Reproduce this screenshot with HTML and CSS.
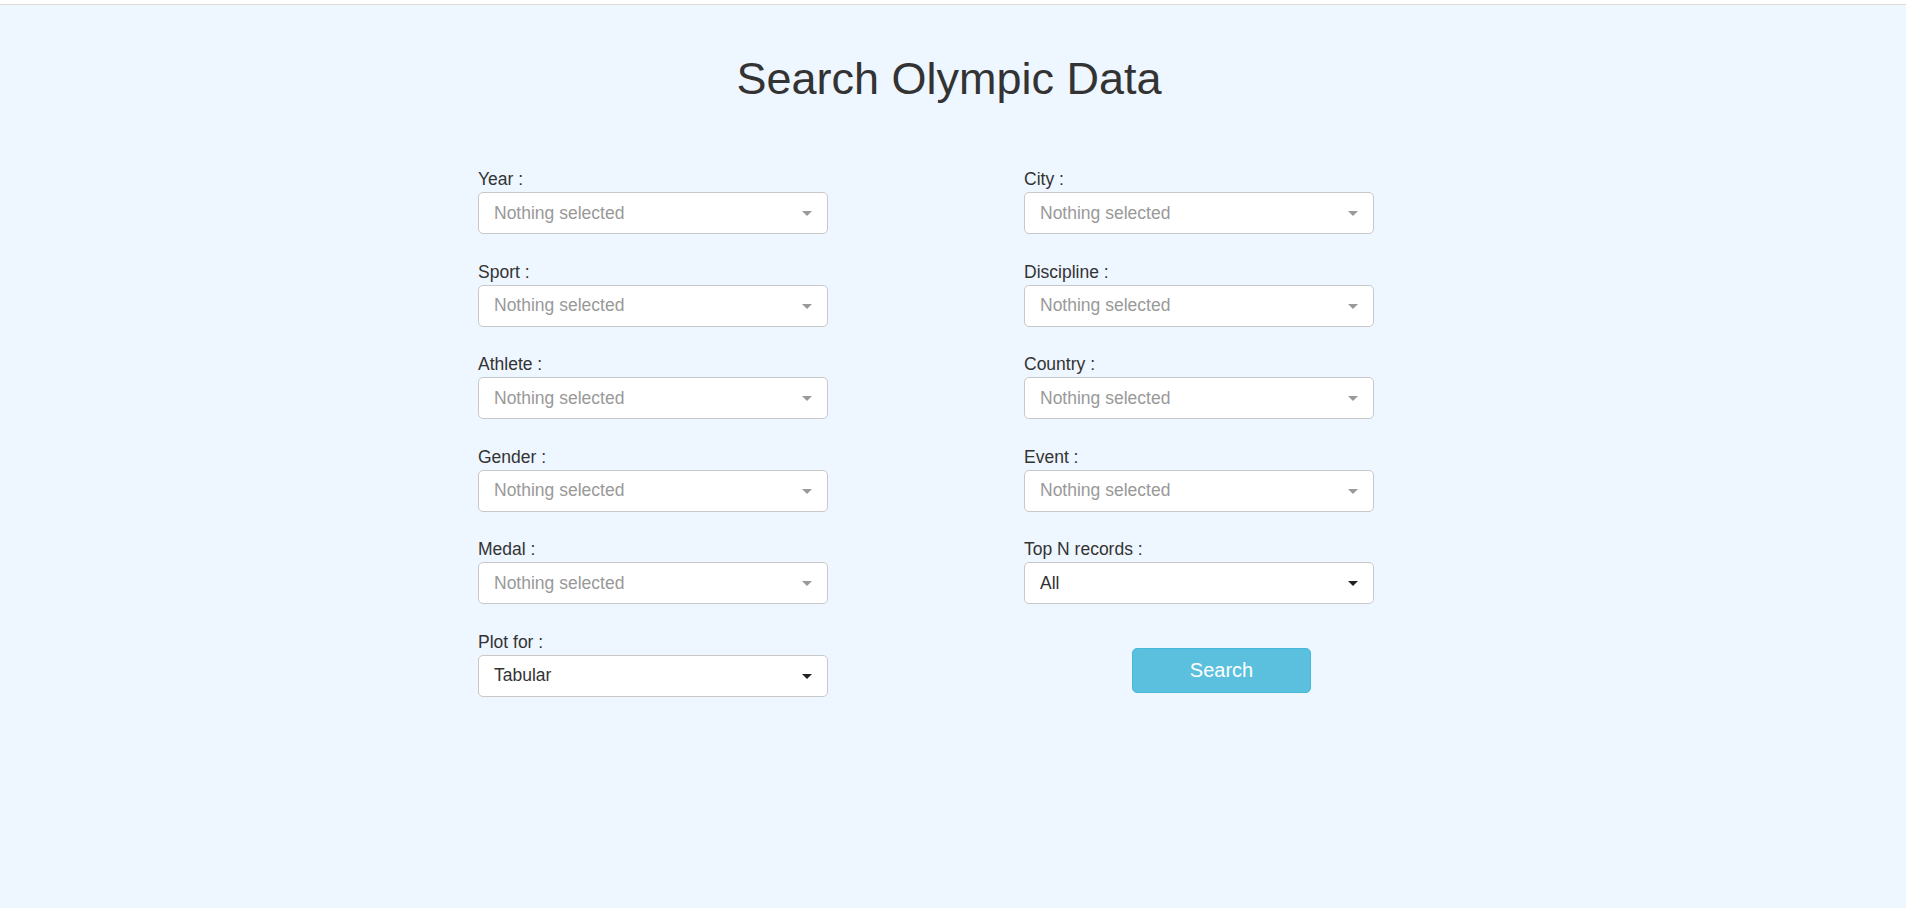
FILE: index.html
```html
<!DOCTYPE html>
<html lang="en">
<head>
<meta charset="utf-8">
<title>Search Olympic Data</title>
<link rel="stylesheet" href="styles.css">
</head>
<body>
<div class="topbar"></div>
<main class="page">
  <h1 class="title">Search Olympic Data</h1>
  <form class="form-grid">
    <div class="col">
      <div class="group"><label class="lbl">Year :</label><div class="select placeholder"><span>Nothing selected</span><i class="caret"></i></div></div>
      <div class="group"><label class="lbl">Sport :</label><div class="select placeholder"><span>Nothing selected</span><i class="caret"></i></div></div>
      <div class="group"><label class="lbl">Athlete :</label><div class="select placeholder"><span>Nothing selected</span><i class="caret"></i></div></div>
      <div class="group"><label class="lbl">Gender :</label><div class="select placeholder"><span>Nothing selected</span><i class="caret"></i></div></div>
      <div class="group"><label class="lbl">Medal :</label><div class="select placeholder"><span>Nothing selected</span><i class="caret"></i></div></div>
      <div class="group"><label class="lbl">Plot for :</label><div class="select"><span>Tabular</span><i class="caret"></i></div></div>
    </div>
    <div class="col">
      <div class="group"><label class="lbl">City :</label><div class="select placeholder"><span>Nothing selected</span><i class="caret"></i></div></div>
      <div class="group"><label class="lbl">Discipline :</label><div class="select placeholder"><span>Nothing selected</span><i class="caret"></i></div></div>
      <div class="group"><label class="lbl">Country :</label><div class="select placeholder"><span>Nothing selected</span><i class="caret"></i></div></div>
      <div class="group"><label class="lbl">Event :</label><div class="select placeholder"><span>Nothing selected</span><i class="caret"></i></div></div>
      <div class="group"><label class="lbl">Top N records :</label><div class="select"><span>All</span><i class="caret"></i></div></div>
      <button type="button" class="btn-search">Search</button>
    </div>
  </form>
</main>
</body>
</html>
```

FILE: styles.css
```css
html, body {
  margin: 0;
  padding: 0;
  height: 100%;
}
body {
  background: #eef6ff;
  font-family: "Liberation Sans", Arial, sans-serif;
  font-size: 17.5px;
  line-height: 1.42857;
  color: #333;
}
.topbar {
  height: 4px;
  background: #fff;
  border-bottom: 1px solid #dcdcdc;
}
.page {
  padding-top: 49px;
}
.title {
  margin: 0;
  text-align: center;
  font-size: 45px;
  font-weight: 500;
  line-height: 1.1;
  color: #333;
  padding-right: 8px;
}
.form-grid {
  margin: 57px 0 0 calc(50% - 475px);
  width: 896px;
  display: grid;
  grid-template-columns: 350px 350px;
  column-gap: 196px;
}
.col {
  display: flex;
  flex-direction: column;
}
.group {
  display: flex;
  flex-direction: column;
  margin-bottom: 19px;
}
.lbl {
  display: block;
  height: 25px;
  line-height: 25px;
  margin-bottom: 6.5px;
  padding-top: 6.5px;
  box-sizing: border-box;
  color: #333;
  overflow: visible;
}
.select {
  box-sizing: border-box;
  height: 42px;
  border: 1px solid #c8c8c8;
  border-radius: 5px;
  background: #fff;
  display: flex;
  align-items: center;
  justify-content: space-between;
  padding: 0 15px 0 15px;
  color: #333;
}
.select.placeholder {
  color: #999;
}
.caret {
  display: block;
  width: 0;
  height: 0;
  border-left: 5px solid transparent;
  border-right: 5px solid transparent;
  border-top: 5px solid #222;
  margin-top: 1px;
}
.select.placeholder .caret {
  border-top-color: #999;
}
.btn-search {
  align-self: flex-start;
  margin: 25px 0 0 108px;
  width: 179px;
  height: 45px;
  border: 1px solid #46b8da;
  border-radius: 5px;
  background: #5bc0de;
  color: #fff;
  font-family: "Liberation Sans", Arial, sans-serif;
  font-size: 20px;
  padding: 0;
}
```
